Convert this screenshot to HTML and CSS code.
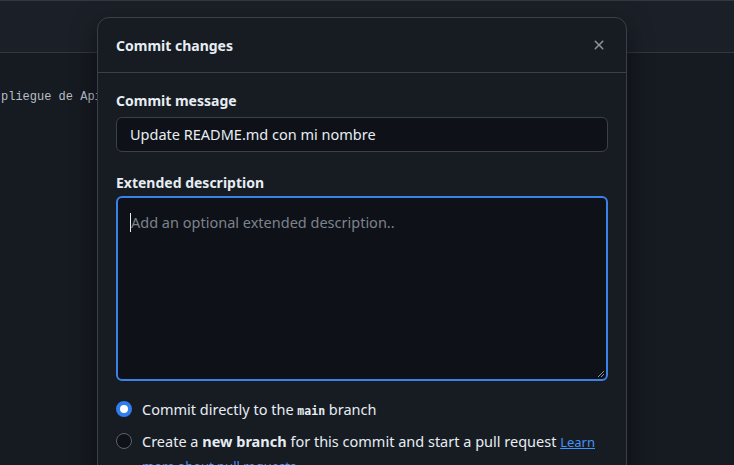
FILE: index.html
```html
<!DOCTYPE html>
<html lang="en">
<head>
<meta charset="utf-8">
<link rel="stylesheet" href="styles.css">
<title>Commit changes</title>
</head>
<body>
<div class="page">
  <div class="topbar"></div>
  <div class="content">
    <div class="code-line">pliegue de Api</div>
  </div>
</div>

<div class="dialog" role="dialog">
  <div class="dialog-header">
    <h2 class="dialog-title">Commit changes</h2>
    <button class="close" aria-label="Close">
      <svg width="16" height="16" viewBox="0 0 16 16"><path d="M3.72 3.72a.75.75 0 0 1 1.06 0L8 6.94l3.22-3.220a.749.749 0 0 1 1.275.326.749.749 0 0 1-.215.734L9.06 8l3.22 3.22a.749.749 0 0 1-.326 1.275.749.749 0 0 1-.734-.215L8 9.06l-3.22 3.22a.751.751 0 0 1-1.042-.018.751.751 0 0 1-.018-1.042L6.94 8 3.72 4.78a.75.75 0 0 1 0-1.06Z" fill="currentColor"/></svg>
    </button>
  </div>
  <div class="dialog-body">
    <label class="field-label">Commit message</label>
    <div class="input">Update README.md con mi nombre</div>
    <label class="field-label second">Extended description</label>
    <div class="textarea">
      <span class="caret"></span><span class="placeholder">Add an optional extended description..</span>
      <svg class="grip" width="8" height="8" viewBox="0 0 8 8"><path d="M7 1L1 7M7 4L4 7" stroke="#8b949e" stroke-width="1"/></svg>
    </div>
    <div class="radios">
      <div class="radio-row">
        <span class="radio checked"></span>
        <span class="radio-text">Commit directly to the <code>main</code> branch</span>
      </div>
      <div class="radio-row">
        <span class="radio"></span>
        <span class="radio-text">Create a <strong>new branch</strong> for this commit and start a pull request <a href="#">Learn more about pull requests</a></span>
      </div>
    </div>
  </div>
</div>
</body>
</html>
```
FILE: styles.css
```css
html, body {
  margin: 0;
  padding: 0;
  background: #161a21;
  overflow: hidden;
}
body {
  width: 734px;
  height: 465px;
  position: relative;
  font-family: "Noto Sans", "Open Sans", sans-serif;
  color: #e6edf3;
}
.page {
  display: flex;
  flex-direction: column;
  height: 100%;
}
.topbar {
  height: 51px;
  background: #1b2028;
  border-top: 1px solid #33383f;
  border-bottom: 1px solid #33383f;
}
.content {
  flex: 1;
  background: #161a21;
  padding-top: 35px;
}
.code-line {
  font-family: "Liberation Mono", "DejaVu Sans Mono", monospace;
  font-size: 12px;
  line-height: 18px;
  color: #b8bfc7;
  padding-left: 1px;
  white-space: nowrap;
}

.dialog {
  position: absolute;
  left: 97px;
  top: 17px;
  width: 530px;
  height: 480px;
  background: #171c23;
  border: 1px solid #3a4049;
  border-radius: 12px;
  box-shadow: 0 8px 24px rgba(1, 4, 9, 0.5);
  box-sizing: border-box;
}
.dialog-header {
  display: flex;
  align-items: center;
  justify-content: space-between;
  height: 54px;
  padding: 0 19px 0 18px;
  border-bottom: 1px solid #3a4049;
}
.dialog-title {
  margin: 0;
  font-size: 14px;
  font-weight: 700;
  color: #e6edf3;
}
.close {
  background: none;
  border: 0;
  padding: 0;
  color: #8d949c;
  width: 16px;
  height: 16px;
  display: flex;
}
.dialog-body {
  padding: 18px 18px 0 18px;
  display: flex;
  flex-direction: column;
}
.field-label {
  font-size: 14px;
  font-weight: 700;
  line-height: 20px;
  color: #e6edf3;
  margin-bottom: 6px;
}
.field-label.second {
  margin-top: 21px;
  margin-bottom: 3px;
}
.input {
  height: 35px;
  box-sizing: border-box;
  background: #0e1117;
  border: 1px solid #3a4049;
  border-radius: 6px;
  padding: 0 13px;
  font-size: 14.5px;
  line-height: 33px;
  color: #e6edf3;
}
.textarea {
  position: relative;
  height: 185px;
  box-sizing: border-box;
  background: #0e1117;
  border: 2px solid #3b82e8;
  border-radius: 6px;
  padding: 13px 12px;
  font-size: 14.5px;
  line-height: 22px;
  display: flex;
  align-items: flex-start;
}
.caret {
  width: 1px;
  height: 19px;
  margin-top: 2px;
  background: #e6edf3;
}
.placeholder {
  color: #7c838c;
}
.grip {
  position: absolute;
  right: 1px;
  bottom: 1px;
}
.radios {
  display: flex;
  flex-direction: column;
  gap: 8px;
  margin-top: 16px;
}
.radio-row {
  display: flex;
  align-items: flex-start;
  gap: 10px;
}
.radio {
  flex: none;
  width: 16px;
  height: 16px;
  box-sizing: border-box;
  border-radius: 50%;
  border: 1px solid #5c636c;
  background: #0e1117;
  margin-top: 4px;
}
.radio.checked {
  border: 4px solid #2f7df0;
  background: #ffffff;
}
.radio-text {
  font-size: 14.5px;
  line-height: 24px;
  color: #e6edf3;
}
.radio-text code {
  font-family: "DejaVu Sans Mono", "Liberation Mono", monospace;
  font-size: 11.5px;
  font-weight: 700;
  line-height: 1;
}
.radio-text strong {
  font-weight: 700;
}
.radio-text a {
  color: #4493f8;
  text-decoration: underline;
  font-size: 13px;
  line-height: 1;
}
```
